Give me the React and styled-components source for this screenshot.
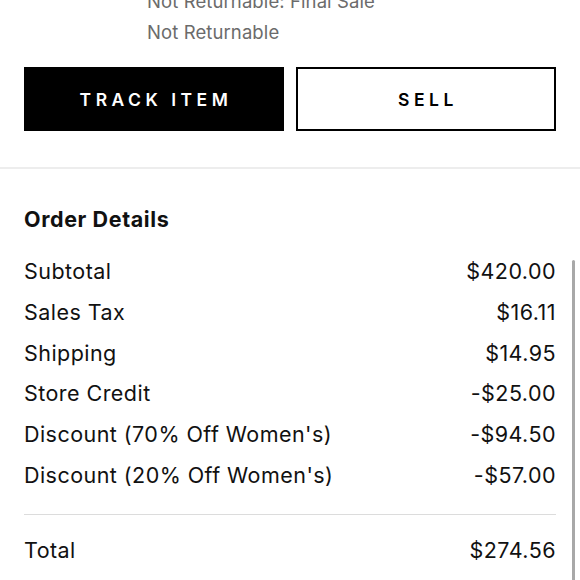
import React from "react";
import styled, { createGlobalStyle } from "styled-components";

const GlobalStyle = createGlobalStyle`
  html, body {
    margin: 0;
    padding: 0;
    background: #fff;
    overflow: hidden;
  }
  body {
    font-family: Inter, "Noto Sans", "Liberation Sans", sans-serif;
    color: #111;
  }
`;

const Page = styled.div`
  width: 580px;
  height: 580px;
  overflow: hidden;
  position: relative;
`;

const ItemInfo = styled.div`
  margin-top: -14px;
  padding-left: 147px;
`;

const Note = styled.div`
  font-size: 18.5px;
  line-height: 31px;
  letter-spacing: 0.1px;
  color: #6b6b6b;
`;

const Actions = styled.div`
  display: grid;
  grid-template-columns: 1fr 1fr;
  gap: 12px;
  padding: 19px 24px 36px;
  border-bottom: 2px solid #ededed;
`;

const Button = styled.button`
  height: 64px;
  box-sizing: border-box;
  border: 2px solid #000;
  background: ${(p) => (p.$dark ? "#000" : "#fff")};
  color: ${(p) => (p.$dark ? "#fff" : "#000")};
  font-family: Inter, "Liberation Sans", sans-serif;
  font-size: 17.5px;
  font-weight: 600;
  letter-spacing: 4.5px;
  text-transform: uppercase;
  padding: 0 0 0 4px;
`;

const Details = styled.section`
  padding: 36px 24px 0;
`;

const Title = styled.h2`
  margin: 0 0 18px;
  font-size: 21.5px;
  font-weight: 700;
  letter-spacing: 0.6px;
  line-height: 28px;
`;

const Row = styled.div`
  display: flex;
  justify-content: space-between;
  font-size: 21.5px;
  letter-spacing: 0.45px;
  line-height: 40.8px;
`;

const Divider = styled.hr`
  border: none;
  border-top: 1px solid #dcdcdc;
  margin: 18px 0 15px;
`;

const ScrollThumb = styled.div`
  position: absolute;
  right: 5px;
  top: 260px;
  bottom: -10px;
  width: 3px;
  border-radius: 2px;
  background: #a8a8a8;
`;

const lines = [
  ["Subtotal", "$420.00"],
  ["Sales Tax", "$16.11"],
  ["Shipping", "$14.95"],
  ["Store Credit", "-$25.00"],
  ["Discount (70% Off Women's)", "-$94.50"],
  ["Discount (20% Off Women's)", "-$57.00"],
];

export default function App() {
  return (
    <>
      <GlobalStyle />
      <Page>
        <ItemInfo>
          <Note>Not Returnable: Final Sale</Note>
          <Note>Not Returnable</Note>
        </ItemInfo>
        <Actions>
          <Button $dark>Track Item</Button>
          <Button>Sell</Button>
        </Actions>
        <Details>
          <Title>Order Details</Title>
          {lines.map(([label, value]) => (
            <Row key={label}>
              <span>{label}</span>
              <span>{value}</span>
            </Row>
          ))}
          <Divider />
          <Row>
            <span>Total</span>
            <span>$274.56</span>
          </Row>
        </Details>
        <ScrollThumb />
      </Page>
    </>
  );
}
